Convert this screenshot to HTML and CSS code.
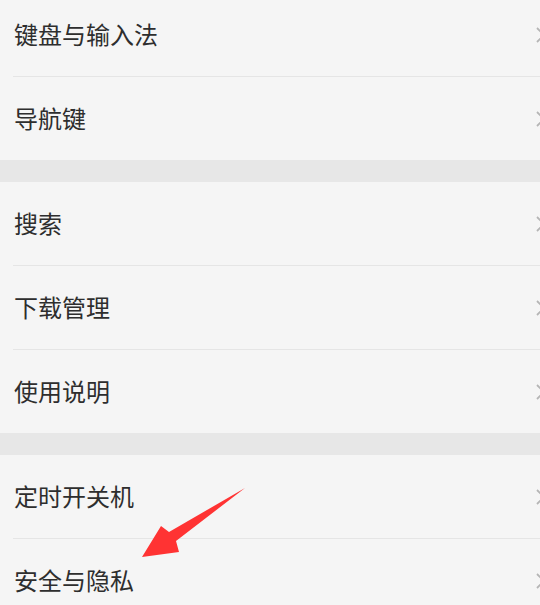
FILE: index.html
```html
<!DOCTYPE html>
<html lang="zh">
<head>
<meta charset="utf-8">
<link rel="stylesheet" href="styles.css">
</head>
<body>
<div class="page">
  <section class="group group-first">
    <div class="row"><span class="label">键盘与输入法</span><svg class="chev" viewBox="0 0 10 16"><path d="M1 1 L8 8 L1 15"/></svg></div>
    <div class="row"><span class="label">导航键</span><svg class="chev" viewBox="0 0 10 16"><path d="M1 1 L8 8 L1 15"/></svg></div>
  </section>
  <section class="group">
    <div class="row"><span class="label">搜索</span><svg class="chev" viewBox="0 0 10 16"><path d="M1 1 L8 8 L1 15"/></svg></div>
    <div class="row"><span class="label">下载管理</span><svg class="chev" viewBox="0 0 10 16"><path d="M1 1 L8 8 L1 15"/></svg></div>
    <div class="row"><span class="label">使用说明</span><svg class="chev" viewBox="0 0 10 16"><path d="M1 1 L8 8 L1 15"/></svg></div>
  </section>
  <section class="group">
    <div class="row"><span class="label">定时开关机</span><svg class="chev" viewBox="0 0 10 16"><path d="M1 1 L8 8 L1 15"/></svg></div>
    <div class="row"><span class="label">安全与隐私</span><svg class="chev" viewBox="0 0 10 16"><path d="M1 1 L8 8 L1 15"/></svg></div>
  </section>
  <svg class="arrow" viewBox="0 0 540 605" width="540" height="605">
    <polygon points="245,488 176,541 179,552 142,557 161,526 169,532"/>
  </svg>
</div>
</body>
</html>
```

FILE: styles.css
```css
html, body {
  margin: 0;
  padding: 0;
  background: #f5f5f5;
  overflow: hidden;
}
.page {
  position: relative;
  width: 540px;
  height: 605px;
  overflow: hidden;
  font-family: "Noto Sans CJK SC", "Noto Sans", sans-serif;
}
.group {
  background: #f5f5f5;
  border-bottom: 22px solid #e7e7e7;
}
.group-first {
  margin-top: -7px;
}
.row {
  height: 83px;
  display: flex;
  align-items: center;
  justify-content: space-between;
  margin-left: 13px;
  border-bottom: 1px solid #e5e5e5;
}
.row:last-child {
  border-bottom: none;
}
.label {
  font-size: 24px;
  line-height: 30px;
  color: #2e2e2e;
  padding-left: 1px;
  padding-bottom: 2px;
}
.chev {
  width: 10px;
  height: 16px;
  margin-right: -6px;
  fill: none;
  stroke: #b5b5b5;
  stroke-width: 1.8;
}
.arrow {
  position: absolute;
  left: 0;
  top: 0;
  pointer-events: none;
}
.arrow polygon {
  fill: #ff3333;
}
```
